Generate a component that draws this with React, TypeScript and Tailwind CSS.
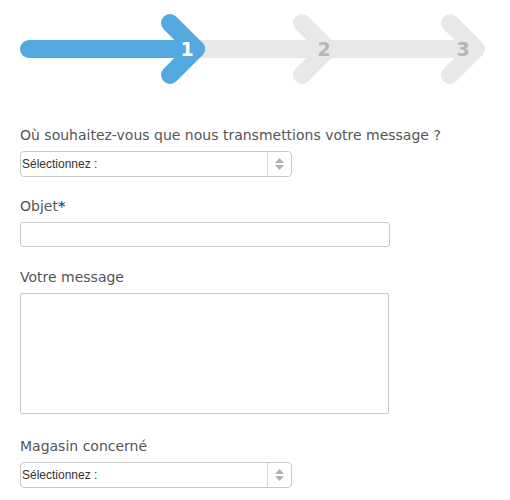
import type { ReactNode } from "react";

const font = { fontFamily: '"DejaVu Sans", Verdana, sans-serif' };

function Stepper() {
  const chevron = (tip: number) => `M${tip - 26} 23 L${tip} 49 L${tip - 26} 75`;
  return (
    <svg className="block" width="510" height="100" viewBox="0 0 510 100">
      <g fill="none" strokeLinecap="round" strokeLinejoin="round" strokeWidth="18">
        <path d="M196 49 H476" stroke="#e8e8e8" strokeLinecap="butt" />
        <path d={chevron(328)} stroke="#e8e8e8" />
        <path d={chevron(476)} stroke="#e8e8e8" />
        <path d="M29 49 H196" stroke="#52a8df" />
        <path d={chevron(196)} stroke="#52a8df" />
      </g>
      <g fontFamily='"DejaVu Sans", Verdana, sans-serif' fontWeight="bold" fontSize="19" textAnchor="middle">
        <text x="187" y="56" fill="#ffffff">1</text>
        <text x="324" y="56" fill="#b5b5b5">2</text>
        <text x="463" y="56" fill="#b5b5b5">3</text>
      </g>
    </svg>
  );
}

function Label({ children }: { children: ReactNode }) {
  return <div className="mb-[7px] text-[14px] leading-[18px] text-[#555]">{children}</div>;
}

function SelectBox() {
  return (
    <div className="flex h-[26px] w-[272px] items-center rounded-[4px] border border-[#c9c9c9] bg-white">
      <span className="flex-1 pl-px text-[12px] text-[#333]" style={{ fontFamily: '"Liberation Sans", Arial, sans-serif' }}>
        Sélectionnez :
      </span>
      <div className="flex h-full w-[24px] flex-col items-center justify-center gap-[2px] border-l border-[#d6d6d6]">
        <svg width="9" height="5" viewBox="0 0 9 5"><path d="M0 5 L4.5 0 L9 5Z" fill="#b0b0b0" /></svg>
        <svg width="9" height="5" viewBox="0 0 9 5"><path d="M0 0 L4.5 5 L9 0Z" fill="#b0b0b0" /></svg>
      </div>
    </div>
  );
}

export default function App() {
  return (
    <div className="h-[500px] w-[510px] overflow-hidden bg-white" style={font}>
      <Stepper />
      <div className="pl-5 pt-[26px]">
        <Label>Où souhaitez-vous que nous transmettions votre message ?</Label>
        <SelectBox />

        <div className="mt-[20px]">
          <Label>
            Objet<span className="font-bold text-[#1f5fae]">*</span>
          </Label>
          <div className="h-[25px] w-[370px] rounded-[3px] border border-[#c9c9c9] bg-white" />
        </div>

        <div className="mt-[21px]">
          <Label>Votre message</Label>
          <div className="h-[121px] w-[369px] rounded-[2px] border border-[#c9c9c9] bg-white" />
        </div>

        <div className="mt-[23px]">
          <Label>Magasin concerné</Label>
          <SelectBox />
        </div>
      </div>
    </div>
  );
}
